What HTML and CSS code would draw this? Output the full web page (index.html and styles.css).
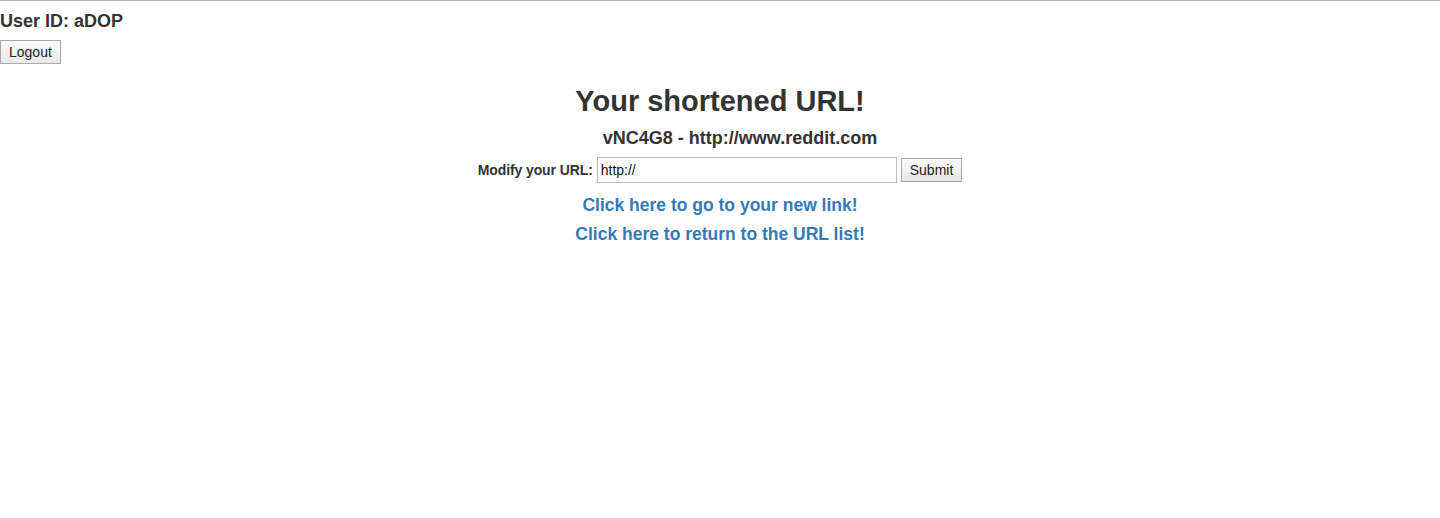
FILE: index.html
```html
<!DOCTYPE html>
<html>
<head>
<meta charset="utf-8">
<link rel="stylesheet" href="styles.css">
</head>
<body>
<header class="topbar">
  <h4 class="user">User ID: aDOP</h4>
  <button class="btn">Logout</button>
</header>
<main class="content">
  <h2 class="title">Your shortened URL!</h2>
  <h4 class="short">vNC4G8 - http://www.reddit.com</h4>
  <form class="modify">
    <label class="label">Modify your URL:</label>
    <input class="url-input" type="text" value="http://">
    <button class="btn" type="button">Submit</button>
  </form>
  <h4 class="link first"><a href="#">Click here to go to your new link!</a></h4>
  <h4 class="link"><a href="#">Click here to return to the URL list!</a></h4>
</main>
</body>
</html>
```

FILE: styles.css
```css
html, body {
  margin: 0;
  padding: 0;
  background: #fff;
}
body {
  border-top: 1px solid #b3b3b3;
  font-family: "Liberation Sans", Arial, sans-serif;
  color: #333;
  font-size: 14px;
}
.topbar {
  display: flex;
  flex-direction: column;
  align-items: flex-start;
}
.user {
  margin: 10px 0 9px;
  font-size: 18px;
  font-weight: bold;
  line-height: 20px;
}
.btn {
  font-family: "Liberation Sans", Arial, sans-serif;
  font-size: 14px;
  color: #222;
  background: linear-gradient(#fafafa, #e8e8e8);
  border: 1px solid #a9a9a9;
  border-radius: 0;
  padding: 1px 8px;
  height: 24px;
}
.content {
  display: flex;
  flex-direction: column;
  align-items: center;
}
.title {
  margin: 21px 0 10px;
  font-size: 29px;
  font-weight: bold;
  line-height: 33px;
}
.short {
  margin: 0 0 9px;
  padding-left: 40px;
  font-size: 18px;
  font-weight: bold;
  line-height: 20px;
}
.modify {
  display: flex;
  align-items: center;
  gap: 4px;
  margin: 0 0 12px;
}
.label {
  font-weight: bold;
  font-size: 14px;
  letter-spacing: -0.1px;
}
.url-input {
  width: 292px;
  height: 22px;
  border: 1px solid #bbb;
  padding: 1px 3px;
  font-family: "Liberation Sans", Arial, sans-serif;
  font-size: 14px;
  color: #111;
  box-sizing: content-box;
}
.link {
  margin: 0 0 9px;
  font-size: 17.5px;
  font-weight: bold;
  line-height: 20px;
}
.link a {
  color: #337ab7;
  text-decoration: none;
}
```
